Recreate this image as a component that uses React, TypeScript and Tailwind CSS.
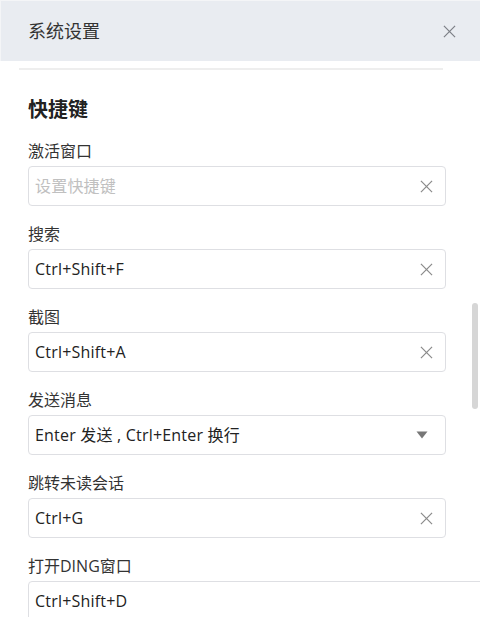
const FONT = "font-['Open_Sans','Noto_Sans_CJK_SC',sans-serif]";

type Row = {
  label: string;
  value?: string;
  placeholder?: string;
  select?: boolean;
  wide?: boolean;
};

const rows: Row[] = [
  { label: "激活窗口", placeholder: "设置快捷键" },
  { label: "搜索", value: "Ctrl+Shift+F" },
  { label: "截图", value: "Ctrl+Shift+A" },
  { label: "发送消息", value: "Enter 发送 , Ctrl+Enter 换行", select: true },
  { label: "跳转未读会话", value: "Ctrl+G" },
  { label: "打开DING窗口", value: "Ctrl+Shift+D", wide: true },
];

function Cross({ size, color }: { size: number; color: string }) {
  return (
    <svg width={size} height={size} viewBox="0 0 14 14" fill="none">
      <path d="M1 1 L13 13 M13 1 L1 13" stroke={color} strokeWidth="1.3" />
    </svg>
  );
}

function ShortcutField({ row }: { row: Row }) {
  return (
    <div className="flex flex-col">
      <label className="h-[22px] leading-[22px] text-[16px] text-[#333]">
        {row.label}
      </label>
      <div
        className={`mt-[4px] flex items-center h-[40px] border border-[#dedfe3] rounded-[4px] bg-white pl-[6px] ${
          row.wide ? "w-[470px] rounded-r-none" : "w-[418px]"
        } ${row.select ? "pr-[17px]" : "pr-[12px]"}`}
      >
        <span
          className={`flex-1 text-[16px] tracking-[0.2px] ${
            row.value ? "text-[#222]" : "text-[#c0c0c0]"
          }`}
        >
          {row.value ?? row.placeholder}
        </span>
        {!row.wide &&
          (row.select ? (
            <svg width="12" height="8" viewBox="0 0 12 8">
              <path d="M0.5 0.5 H11.5 L6 7.5 Z" fill="#777" />
            </svg>
          ) : (
            <Cross size={13} color="#8a8a8a" />
          ))}
      </div>
    </div>
  );
}

export default function App() {
  return (
    <div className={`relative w-[480px] h-[617px] overflow-hidden bg-white ${FONT}`}>
      {/* Header */}
      <div className="flex items-center justify-between h-[61px] bg-[#e9ecf1] border-t border-l border-[#f4f5f7] pl-[27px] pr-[24px]">
        <h1 className="text-[18px] text-[#333]">系统设置</h1>
        <Cross size={13} color="#7c7f86" />
      </div>

      {/* Divider */}
      <div className="ml-[19px] mr-[37px] mt-[7px] h-[2px] bg-[#eeeeee]" />

      {/* Content */}
      <div className="pl-[28px] pt-[26px]">
        <h2 className="h-[28px] leading-[28px] text-[20px] font-bold text-[#222]">
          快捷键
        </h2>
        <div className="mt-[16px] flex flex-col gap-[17px]">
          {rows.map((row) => (
            <ShortcutField key={row.label} row={row} />
          ))}
        </div>
      </div>

      {/* Scrollbar */}
      <div className="absolute left-[472px] top-[303px] w-[6px] h-[106px] rounded-full bg-[#d6d6d6]" />
    </div>
  );
}
